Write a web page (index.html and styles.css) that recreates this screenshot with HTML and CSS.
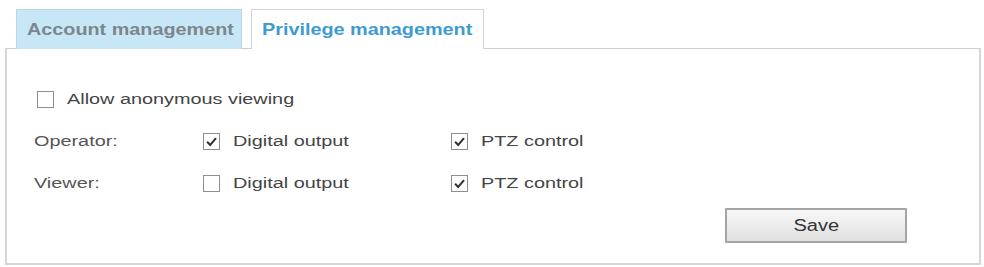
FILE: index.html
```html
<!DOCTYPE html>
<html>
<head>
<meta charset="utf-8">
<link rel="stylesheet" href="styles.css">
</head>
<body>
<div class="page">
  <div class="tabs">
    <div class="tab tab-inactive"><span class="tab-text">Account management</span></div>
    <div class="tab tab-active"><span class="tab-text">Privilege management</span></div>
  </div>
  <div class="panel">
    <div class="row anon">
      <span class="cb"></span>
      <span class="label">Allow anonymous viewing</span>
    </div>
    <div class="grid">
      <span class="role">Operator:</span>
      <span class="opt"><span class="cb"><svg viewBox="0 0 16 16"><path d="M3.3 8.2 L6.6 11.6 L12.8 4.4"/></svg></span><span class="label">Digital output</span></span>
      <span class="opt"><span class="cb"><svg viewBox="0 0 16 16"><path d="M3.3 8.2 L6.6 11.6 L12.8 4.4"/></svg></span><span class="label">PTZ control</span></span>
      <span class="role">Viewer:</span>
      <span class="opt"><span class="cb"></span><span class="label">Digital output</span></span>
      <span class="opt"><span class="cb"><svg viewBox="0 0 16 16"><path d="M3.3 8.2 L6.6 11.6 L12.8 4.4"/></svg></span><span class="label">PTZ control</span></span>
    </div>
    <div class="actions">
      <button class="save"><span class="save-text">Save</span></button>
    </div>
  </div>
</div>
</body>
</html>
```

FILE: styles.css
```css
html, body {
  margin: 0;
  padding: 0;
  background: #fff;
}
.page {
  width: 984px;
  height: 267px;
  font-family: "Liberation Sans", Arial, sans-serif;
  color: #444;
}
.tabs {
  display: flex;
  gap: 9px;
  padding: 9px 0 0 16px;
  height: 39px;
  box-sizing: content-box;
}
.tab {
  box-sizing: border-box;
  height: 40px;
  padding: 0 10px;
  display: flex;
  align-items: center;
  font-size: 17px;
  font-weight: bold;
  border: 1px solid #d4d4d4;
  border-bottom: none;
  position: relative;
  z-index: 1;
}
.tab-text {
  display: inline-block;
  transform: scaleX(1.165);
  transform-origin: left center;
  white-space: nowrap;
}
.tab-inactive {
  width: 226px;
  background: #c8e7f6;
  color: #7b868d;
  border-color: #bcd6e3;
}
.tab-active {
  width: 233px;
  background: #fff;
  color: #3d9bd2;
}
.panel {
  margin: 0 3px 0 5px;
  height: 217px;
  box-sizing: border-box;
  border: 2px solid #d6d6d6;
  border-top: 1px solid #cfcfcf;
  padding: 41px 0 0 0;
}
.row {
  display: flex;
  align-items: center;
}
.anon {
  padding-left: 30px;
  height: 18px;
}
.cb {
  box-sizing: border-box;
  width: 17px;
  height: 17px;
  border: 1px solid #8e8e8e;
  background: #fff;
  display: inline-flex;
  align-items: center;
  justify-content: center;
  flex: none;
}
.cb svg {
  width: 15px;
  height: 15px;
}
.cb svg path {
  fill: none;
  stroke: #333;
  stroke-width: 2.2;
}
.label {
  display: inline-block;
  font-size: 15.5px;
  color: #444;
  margin-left: 13px;
  transform: scaleX(1.28);
  transform-origin: left center;
  white-space: nowrap;
}
.grid {
  display: grid;
  grid-template-columns: 169px 248px auto;
  grid-auto-rows: 18px;
  row-gap: 24px;
  padding-left: 27px;
  margin-top: 24px;
  align-items: center;
}
.role {
  display: inline-block;
  font-size: 15.5px;
  color: #555;
  transform: scaleX(1.28);
  transform-origin: left center;
  white-space: nowrap;
  justify-self: start;
}
.opt {
  display: flex;
  align-items: center;
}
.actions {
  display: flex;
  justify-content: flex-end;
  padding-right: 72px;
  margin-top: 16px;
}
.save {
  width: 182px;
  height: 35px;
  font-family: "Liberation Sans", Arial, sans-serif;
  font-size: 16px;
  color: #333;
  border: 2px solid #a4a4a4;
  border-radius: 1px;
  background: linear-gradient(#f8f8f8, #e0e0e0);
  padding: 0;
}
.save-text {
  display: inline-block;
  transform: scaleX(1.25);
}
```
